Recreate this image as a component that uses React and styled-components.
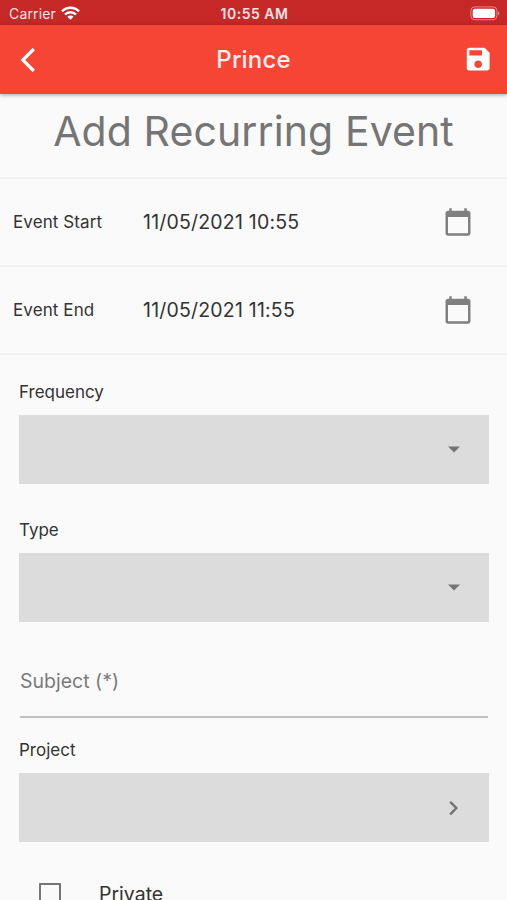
import React from 'react';
import styled, { createGlobalStyle } from 'styled-components';

export default function App() {
  return (
    <Screen>
      <GlobalStyle />
      <StatusBar>
        <Carrier>
          <span>Carrier</span>
          <WifiIcon />
        </Carrier>
        <Clock>10:55 AM</Clock>
        <BatteryIcon />
      </StatusBar>
      <AppBar>
        <BackIcon />
        <AppTitle>Prince</AppTitle>
        <SaveIcon />
      </AppBar>
      <Heading>Add Recurring Event</Heading>
      <DateRow label="Event Start" value="11/05/2021 10:55" />
      <DateRow label="Event End" value="11/05/2021 11:55" />
      <Form>
        <SelectField label="Frequency" />
        <SelectField label="Type" />
        <SubjectInput>Subject (*)</SubjectInput>
        <ProjectLabel>Project</ProjectLabel>
        <SelectBox>
          <ChevronIcon />
        </SelectBox>
        <CheckRow>
          <Checkbox />
          <CheckLabel>Private</CheckLabel>
        </CheckRow>
      </Form>
    </Screen>
  );
}

const DateRow = ({ label, value }) => (
  <Row>
    <RowLabel>{label}</RowLabel>
    <RowValue>{value}</RowValue>
    <CalendarIcon />
  </Row>
);

const SelectField = ({ label }) => (
  <Field>
    <FieldLabel>{label}</FieldLabel>
    <SelectBox>
      <ArrowIcon />
    </SelectBox>
  </Field>
);

const WifiIcon = () => (
  <svg width="19" height="15" viewBox="0 0 19 15" fill="none" stroke="#fff" strokeWidth="2.4">
    <path d="M1 5.3C5.8 0.5 13.2 0.5 18 5.3" />
    <path d="M4 8.5C7.1 5.4 11.9 5.4 15 8.5" />
    <path d="M6.4 10.7C8.1 9 10.9 9 12.6 10.7L9.5 13.8Z" fill="#fff" stroke="none" />
  </svg>
);

const BatteryIcon = () => (
  <svg width="30" height="16" viewBox="0 0 30 16">
    <rect x="0.9" y="0.9" width="26" height="12.8" rx="3.8" fill="none" stroke="#fff" strokeOpacity="0.45" />
    <rect x="2.7" y="2.7" width="22.4" height="9.2" rx="2.2" fill="#fff" />
    <path d="M28.1 5.2C29.9 5.9 29.9 8.7 28.1 9.4Z" fill="#fff" fillOpacity="0.5" />
  </svg>
);

const BackIcon = () => (
  <svg width="16" height="26" viewBox="0 0 16 26" fill="none" stroke="#fff" strokeWidth="3.2">
    <path d="M13.8 2L2.8 13L13.8 24" />
  </svg>
);

const SaveIcon = () => (
  <svg width="30.4" height="30.4" viewBox="0 0 24 24" fill="#fff">
    <path d="M17 3H5a2 2 0 0 0-2 2v14a2 2 0 0 0 2 2h14c1.1 0 2-.9 2-2V7l-4-4zm-5 16c-1.66 0-3-1.34-3-3s1.34-3 3-3 3 1.34 3 3-1.34 3-3 3zm3-10H5V5h10v4z" />
  </svg>
);

const CalendarIcon = () => (
  <svg width="30" height="30" viewBox="0 0 24 24" fill="#808080">
    <path d="M20 3h-1V1h-2v2H7V1H5v2H4c-1.1 0-2 .9-2 2v16c0 1.1.9 2 2 2h16c1.1 0 2-.9 2-2V5c0-1.1-.9-2-2-2zm0 18H4V8h16v13z" />
  </svg>
);

const ArrowIcon = () => (
  <svg width="12" height="7" viewBox="0 0 12 7" fill="#757575">
    <path d="M0 0.6H12L6 6.6Z" />
  </svg>
);

const ChevronIcon = () => (
  <svg width="12" height="16" viewBox="0 0 12 16" fill="none" stroke="#757575" strokeWidth="2.4">
    <path d="M2.2 1.9L8.4 8.1L2.2 14.3" />
  </svg>
);

const GlobalStyle = createGlobalStyle`
  * {
    box-sizing: border-box;
  }

  body {
    margin: 0;
    background: #fafafa;
    overflow: hidden;
  }

  svg {
    display: block;
    flex: none;
  }
`;

const Screen = styled.div`
  height: 900px;
  overflow: hidden;
  background: #fafafa;
  color: #333;
  font-family: Inter, 'Liberation Sans', sans-serif;
  white-space: nowrap;
`;

const StatusBar = styled.div`
  display: grid;
  grid-template-columns: 1fr auto 1fr;
  align-items: center;
  height: 25px;
  padding: 2px 7px 0 9px;
  background: #c62828;
  color: #fbe4e4;
  font-size: 14px;

  > svg {
    justify-self: end;
  }
`;

const Carrier = styled.div`
  display: flex;
  align-items: center;
  gap: 5px;
  letter-spacing: 0.15px;
`;

const Clock = styled.span`
  font-weight: 600;
  font-size: 14px;
  letter-spacing: 0.5px;
`;

const AppBar = styled.header`
  position: relative;
  display: grid;
  grid-template-columns: 1fr auto 1fr;
  align-items: center;
  height: 69px;
  padding: 0 14px 0 20px;
  background: #f64435;
  box-shadow: 0 1px 4px rgba(0, 0, 0, 0.35);

  > svg:last-child {
    justify-self: end;
  }
`;

const AppTitle = styled.h1`
  margin: 0 6px 0 0;
  color: #fff0ee;
  font-size: 24px;
  font-weight: 500;
  letter-spacing: 0.15px;
`;

const Heading = styled.h2`
  display: flex;
  justify-content: center;
  align-items: center;
  height: 83px;
  margin: 0;
  padding-bottom: 10px;
  color: #757575;
  font-size: 41px;
  font-weight: 400;
  letter-spacing: 0.1px;
`;

const Row = styled.div`
  display: flex;
  align-items: center;
  height: 88px;
  padding: 0 34px 0 13px;
  border-top: 2px solid #f4f4f4;
`;

const RowLabel = styled.span`
  width: 130px;
  font-size: 17px;
  letter-spacing: 0.1px;
`;

const RowValue = styled.span`
  flex: 1;
  font-size: 19.5px;
  letter-spacing: 0.2px;
`;

const Form = styled.div`
  padding: 0 18px 0 19px;
  border-top: 2px solid #f4f4f4;
`;

const Field = styled.div`
  height: 138px;
  padding-top: 27px;
`;

const FieldLabel = styled.div`
  height: 33px;
  font-size: 17px;
  line-height: 21px;
`;

const SelectBox = styled.div`
  display: flex;
  justify-content: flex-end;
  align-items: center;
  height: 69px;
  padding-right: 29px;
  background: #dcdcdc;
`;

const SubjectInput = styled.div`
  display: flex;
  align-items: center;
  height: 87px;
  margin: 0 1px;
  padding-top: 15px;
  border-bottom: 2px solid #c0c0c0;
  color: #7a7a7a;
  font-size: 19.5px;
`;

const ProjectLabel = styled(FieldLabel)`
  height: 55px;
  padding-top: 22px;
`;

const CheckRow = styled.div`
  display: flex;
  align-items: center;
  height: 22px;
  margin: 41px 0 0 20px;
`;

const Checkbox = styled.span`
  width: 22px;
  height: 22px;
  border: 2px solid #757575;
  border-radius: 1px;
`;

const CheckLabel = styled.span`
  margin-left: 38px;
  font-size: 19.5px;
`;
